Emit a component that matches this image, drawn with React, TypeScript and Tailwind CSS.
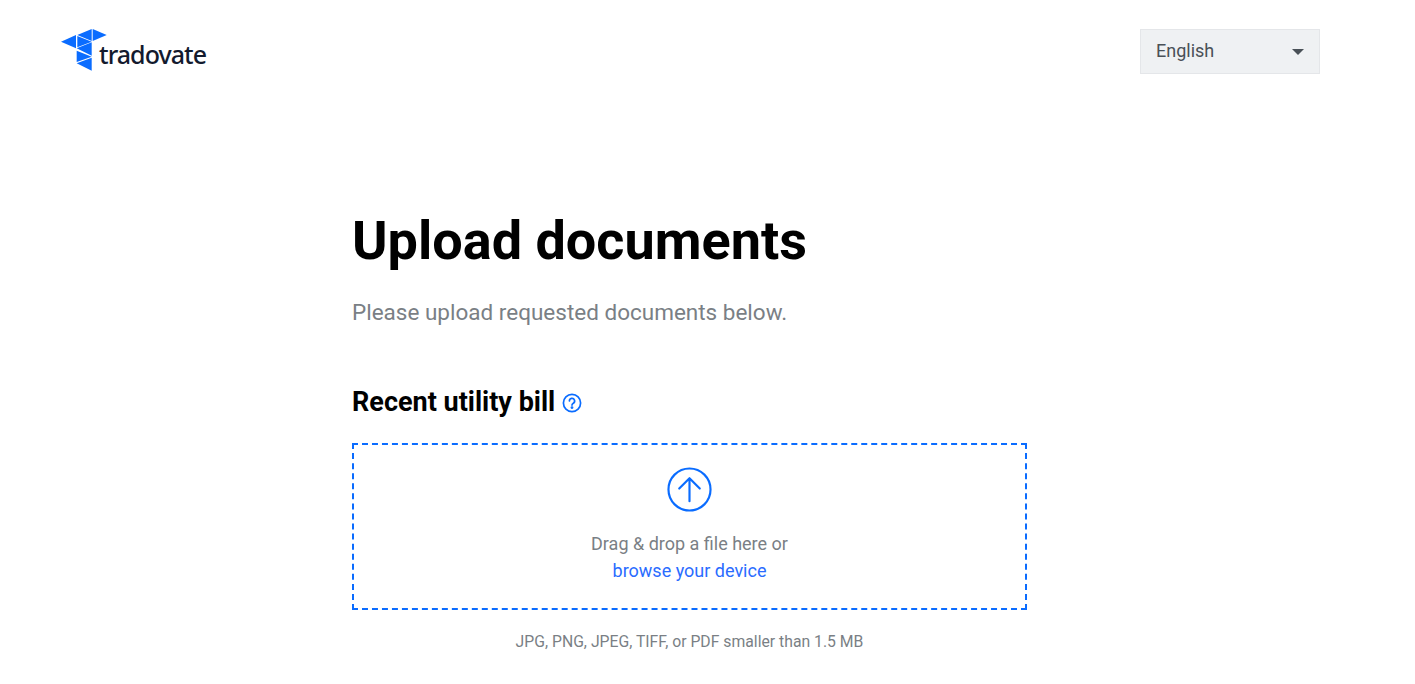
import React from 'react';

const Logo: React.FC = () => (
    <svg width="46" height="42" viewBox="0 0 46 42" className="block">
        <g fill="#0a6cff">
            <polygon points="0,12.7 15,6 15,19.3" />
            <polygon points="16.3,6 30.7,0 30.7,12" />
            <polygon points="31.7,0 45.7,6 31.7,12" />
            <polygon points="16.3,7 30.7,12.7 16.3,18.3" />
            <polygon points="15.7,19.3 30.7,13.3 30.7,26.7" />
            <polygon points="15.7,21.7 30.7,27.7 15.7,33" />
            <polygon points="15.7,34.3 30.7,28.7 30.7,41.7" />
        </g>
    </svg>
);

const App: React.FC = () => {
    return (
        <div className="min-h-[684px] bg-white font-['Roboto',sans-serif]">
            <header className="flex items-start justify-between pl-[61px] pr-[95px] pt-[29px]">
                <div className="flex items-end">
                    <Logo />
                    <span className="ml-[-8px] mb-[2px] font-['Noto_Sans',sans-serif] text-[25px] leading-[30px] font-medium tracking-[-0.95px] text-[#131a2e]">tradovate</span>
                </div>
                <div className="flex h-[45px] w-[180px] items-center justify-between border border-[#e4e6e9] bg-[#eff1f3] pb-[2px] pl-[15px] pr-[15px]">
                    <span className="text-[18px] text-[#495057]">English</span>
                    <span className="mt-[2px] h-0 w-0 border-x-[6px] border-t-[6px] border-x-transparent border-t-[#495057]" />
                </div>
            </header>

            <main className="ml-[352px] mt-[135px] w-[675px]">
                <h1 className="text-[54px] leading-[64px] font-bold text-black">Upload documents</h1>
                <p className="mt-[23px] text-[22.5px] leading-[32px] text-[#7a7f85]">Please upload requested documents below.</p>

                <div className="mt-[58px] flex items-center">
                    <h2 className="text-[27px] leading-[32px] font-bold text-black">Recent utility bill</h2>
                    <svg width="20" height="20" viewBox="0 0 20 20" fill="none" stroke="#0a6cff" strokeWidth="1.7" className="ml-[7px] mt-[1px]">
                        <circle cx="10" cy="10" r="8.6" />
                        <path d="M7.4 8a2.6 2.6 0 1 1 3.9 2.2c-.9.5-1.3 1-1.3 1.9" strokeLinecap="round" />
                        <circle cx="10" cy="14.6" r="0.6" fill="#0a6cff" />
                    </svg>
                </div>

                <div className="mt-[25px] flex h-[167px] flex-col items-center border-2 border-dashed border-[#0a6cff] pt-[22px]">
                    <svg width="45" height="45" viewBox="0 0 46 46" fill="none" stroke="#0a6cff" strokeWidth="2.2" strokeLinecap="round" strokeLinejoin="round">
                        <circle cx="23" cy="23" r="21.5" />
                        <path d="M23 35V11.5M12.5 22 23 11.5 33.5 22" />
                    </svg>
                    <p className="mt-[18px] text-[18px] leading-[27px] text-[#7a7f85]">Drag &amp; drop a file here or</p>
                    <a className="text-[18px] leading-[27px] text-[#2a6cff]">browse your device</a>
                </div>

                <p className="mt-[21px] text-center text-[15.75px] leading-[22px] text-[#7a7f85]">JPG, PNG, JPEG, TIFF, or PDF smaller than 1.5 MB</p>
            </main>
        </div>
    );
};

export default App;
